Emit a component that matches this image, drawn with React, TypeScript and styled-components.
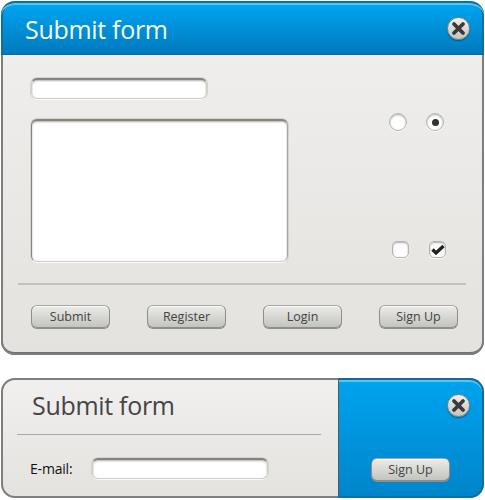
import React from "react";
import styled, { createGlobalStyle } from "styled-components";

const Global = createGlobalStyle`
  html, body { margin: 0; padding: 0; background: #fff; }
  body { width: 485px; height: 500px; overflow: hidden; font-family: "Open Sans", "Noto Sans", sans-serif; }
`;

const Page = styled.div`
  display: flex;
  flex-direction: column;
  gap: 23px;
  padding: 1px 1px 0;
  width: 483px;
`;

const Window = styled.section`
  display: flex;
  flex-direction: column;
  height: 354px;
  box-sizing: border-box;
  border-radius: 14px;
  overflow: hidden;
  background: linear-gradient(#f1f0ee, #e4e2df);
  box-shadow: inset 0 0 0 2px #7d7f7d, inset 0 -3px 0 #6f716f;
`;

const Header = styled.header`
  height: 54px;
  flex: none;
  box-sizing: border-box;
  display: flex;
  align-items: center;
  justify-content: space-between;
  padding: 0 14px 0 24px;
  background: linear-gradient(#00a6f2, #0079bd);
  border-top: 2px solid #0c6f9f;
  border-bottom: 1px solid #0a6b9b;
  box-shadow: inset 0 2px 0 #5cc2ee, inset 2px 0 0 #0c6f9f, inset -2px 0 0 #0c6f9f;
  border-radius: 14px 14px 0 0;
`;

const Title = styled.h1<{ $light?: boolean }>`
  margin: 0;
  font-size: 25px;
  line-height: 32px;
  font-weight: 400;
  letter-spacing: -0.3px;
  color: ${(p) => (p.$light ? "#f4fbff" : "#454545")};
`;

const CloseBtn = styled.button`
  width: 23px;
  height: 23px;
  padding: 0;
  border: 1px solid #84847f;
  border-radius: 50%;
  background: linear-gradient(#f2f1ef, #c3c3be);
  box-shadow: 0 1px 1px rgba(0, 40, 70, 0.45);
  display: flex;
  align-items: center;
  justify-content: center;
  flex: none;
`;

const Body = styled.div`
  flex: 1;
  display: flex;
  flex-direction: column;
  padding: 0 18px 0 17px;
`;

const FormArea = styled.div`
  display: flex;
  height: 230px;
  flex: none;
  justify-content: space-between;
  border-bottom: 2px solid #c2c1bb;
  box-sizing: border-box;
`;

const Fields = styled.div`
  display: flex;
  flex-direction: column;
  gap: 20px;
  padding: 23px 0 0 13px;
`;

const inset = `
  box-sizing: border-box;
  border: 1px solid #cfcec9;
  border-top: 2px solid #85847e;
  background: #fff;
  box-shadow: inset 0 1px 2px rgba(60,60,50,.4), 0 1px 0 #fafaf8, 0 0 0 1px #d4d3ce;
`;

const TextInput = styled.div`
  ${inset}
  width: 176px;
  height: 21px;
  border-radius: 6px;
  flex: none;
`;

const TextArea = styled.div`
  ${inset}
  width: 257px;
  height: 143px;
  border-radius: 6px;
  border-left-color: #85847e;
  border-right-color: #a8a7a1;
`;

const Options = styled.div`
  display: flex;
  flex-direction: column;
  justify-content: space-between;
  padding: 58px 22px 25px 0;
`;

const OptionRow = styled.div<{ $offset: number; $gap: number }>`
  display: flex;
  justify-content: flex-end;
  gap: ${(p) => p.$gap}px;
  margin-right: ${(p) => p.$offset}px;
  align-items: center;
`;

const Radio = styled.div`
  width: 18px;
  height: 18px;
  box-sizing: border-box;
  border-radius: 50%;
  background: #fff;
  border: 1px solid #b5b4ae;
  box-shadow: inset 0 1px 2px rgba(70, 70, 60, 0.45), 0 1px 0 #f8f8f6;
  display: flex;
  align-items: center;
  justify-content: center;
`;

const RadioDot = styled.span`
  width: 7px;
  height: 7px;
  border-radius: 50%;
  background: #333;
`;

const Check = styled.div`
  width: 17px;
  height: 17px;
  box-sizing: border-box;
  border-radius: 5px;
  background: #fff;
  border: 1px solid #b5b4ae;
  box-shadow: inset 0 1px 2px rgba(70, 70, 60, 0.45), 0 1px 0 #f8f8f6;
  display: flex;
  align-items: center;
  justify-content: center;
`;

const ButtonRow = styled.div`
  display: flex;
  gap: 37px;
  padding: 20px 0 0 13px;
`;

const Btn = styled.button`
  width: 79px;
  height: 23px;
  padding: 0;
  box-sizing: border-box;
  border: 1px solid #8e8e88;
  border-top-color: #a7a7a1;
  border-radius: 6px;
  background: linear-gradient(#ecebe8, #c3c4bf);
  box-shadow: inset 0 1px 0 #fbfbfa, 0 1px 0 #8f8f8a;
  font-family: "Open Sans", sans-serif;
  font-size: 12.5px;
  line-height: 20px;
  color: #444;
`;

const Strip = styled.section`
  display: flex;
  height: 120px;
  border-radius: 14px;
  overflow: hidden;
  box-shadow: inset 0 0 0 2px #7d7f7d;
  background: linear-gradient(#f1f0ee, #e4e2df);
`;

const StripMain = styled.div`
  width: 337px;
  flex: none;
  box-sizing: border-box;
  padding: 11px 0 0 16px;
  display: flex;
  flex-direction: column;
`;

const StripTitle = styled.div`
  padding: 0 0 13px 15px;
  border-bottom: 1px solid #a9a8a2;
  width: 304px;
  box-sizing: border-box;
`;

const EmailRow = styled.div`
  display: flex;
  align-items: center;
  padding: 23px 0 0 13px;
`;

const EmailLabel = styled.label`
  width: 62px;
  font-size: 14px;
  line-height: 20px;
  letter-spacing: -0.2px;
  color: #111;
`;

const StripSide = styled.aside`
  flex: 1;
  box-sizing: border-box;
  display: flex;
  flex-direction: column;
  align-items: flex-end;
  justify-content: space-between;
  padding: 14px 12px 15px 0;
  background: linear-gradient(#00a3ee, #0085cb);
  border: 2px solid #0c6f9f;
  border-left: 1px solid #55595a;
  border-radius: 0 14px 14px 0;
  box-shadow: inset 0 2px 0 #5cc2ee;
`;

const SideBtn = styled(Btn)`
  margin-right: 20px;
`;

const Cross = () => (
  <svg width="15" height="15" viewBox="0 0 15 15" aria-hidden="true">
    <path d="M3 3 L12 12 M12 3 L3 12" stroke="#3a3a3a" strokeWidth="3.8" strokeLinecap="round" />
  </svg>
);

const Tick = () => (
  <svg width="14" height="12" viewBox="0 0 14 12" aria-hidden="true">
    <path d="M1.5 5.5 L5 9 L12.5 2" fill="none" stroke="#222" strokeWidth="3.4" strokeLinejoin="miter" />
  </svg>
);

export default function App() {
  return (
    <Page>
      <Global />
      <Window>
        <Header>
          <Title $light>Submit form</Title>
          <CloseBtn aria-label="Close"><Cross /></CloseBtn>
        </Header>
        <Body>
          <FormArea>
            <Fields>
              <TextInput />
              <TextArea />
            </Fields>
            <Options>
              <OptionRow $offset={0} $gap={19}>
                <Radio />
                <Radio><RadioDot /></Radio>
              </OptionRow>
              <OptionRow $offset={-2} $gap={20}>
                <Check />
                <Check><Tick /></Check>
              </OptionRow>
            </Options>
          </FormArea>
          <ButtonRow>
            <Btn>Submit</Btn>
            <Btn>Register</Btn>
            <Btn>Login</Btn>
            <Btn>Sign Up</Btn>
          </ButtonRow>
        </Body>
      </Window>
      <Strip>
        <StripMain>
          <StripTitle><Title>Submit form</Title></StripTitle>
          <EmailRow>
            <EmailLabel>E-mail:</EmailLabel>
            <TextInput />
          </EmailRow>
        </StripMain>
        <StripSide>
          <CloseBtn aria-label="Close"><Cross /></CloseBtn>
          <SideBtn>Sign Up</SideBtn>
        </StripSide>
      </Strip>
    </Page>
  );
}
